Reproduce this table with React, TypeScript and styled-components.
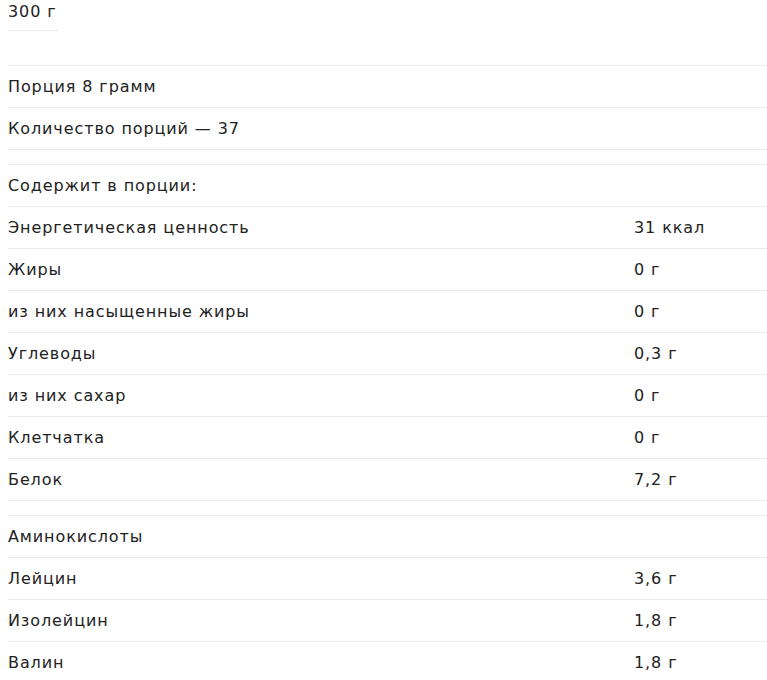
import React from 'react';
import styled, { createGlobalStyle } from 'styled-components';

const GlobalStyle = createGlobalStyle`
  body {
    margin: 0;
    padding: 2px 0 0 8px;
    background: #fff;
    color: #222;
    font-family: "DejaVu Sans", Verdana, sans-serif;
    font-size: 16px;
    letter-spacing: 0.9px;
  }
`;

const Weight = styled.div`
  display: inline-block;
  padding: 0 2px 8px 0;
  line-height: 20px;
  border-bottom: 1px solid #eaeaea;
  margin-bottom: 34px;
`;

const Table = styled.div`
  display: grid;
  grid-template-columns: 626px 1fr;
  border-top: 1px solid #eaeaea;
  margin-bottom: 14px;
`;

const Cell = styled.div`
  height: 41px;
  line-height: 41px;
  border-bottom: 1px solid #eaeaea;
  white-space: nowrap;
`;

type Row = [string, string?];

const servings: Row[] = [['Порция 8 грамм'], ['Количество порций — 37']];

const nutrients: Row[] = [
  ['Содержит в порции:'],
  ['Энергетическая ценность', '31 ккал'],
  ['Жиры', '0 г'],
  ['из них насыщенные жиры', '0 г'],
  ['Углеводы', '0,3 г'],
  ['из них сахар', '0 г'],
  ['Клетчатка', '0 г'],
  ['Белок', '7,2 г'],
];

const aminos: Row[] = [
  ['Аминокислоты'],
  ['Лейцин', '3,6 г'],
  ['Изолейцин', '1,8 г'],
  ['Валин', '1,8 г'],
];

const InfoTable = ({ rows }: { rows: Row[] }) => (
  <Table>
    {rows.map(([label, value], i) => (
      <React.Fragment key={i}>
        <Cell>{label}</Cell>
        <Cell>{value ?? ''}</Cell>
      </React.Fragment>
    ))}
  </Table>
);

export default function App() {
  return (
    <>
      <GlobalStyle />
      <Weight>300 г</Weight>
      <InfoTable rows={servings} />
      <InfoTable rows={nutrients} />
      <InfoTable rows={aminos} />
    </>
  );
}
